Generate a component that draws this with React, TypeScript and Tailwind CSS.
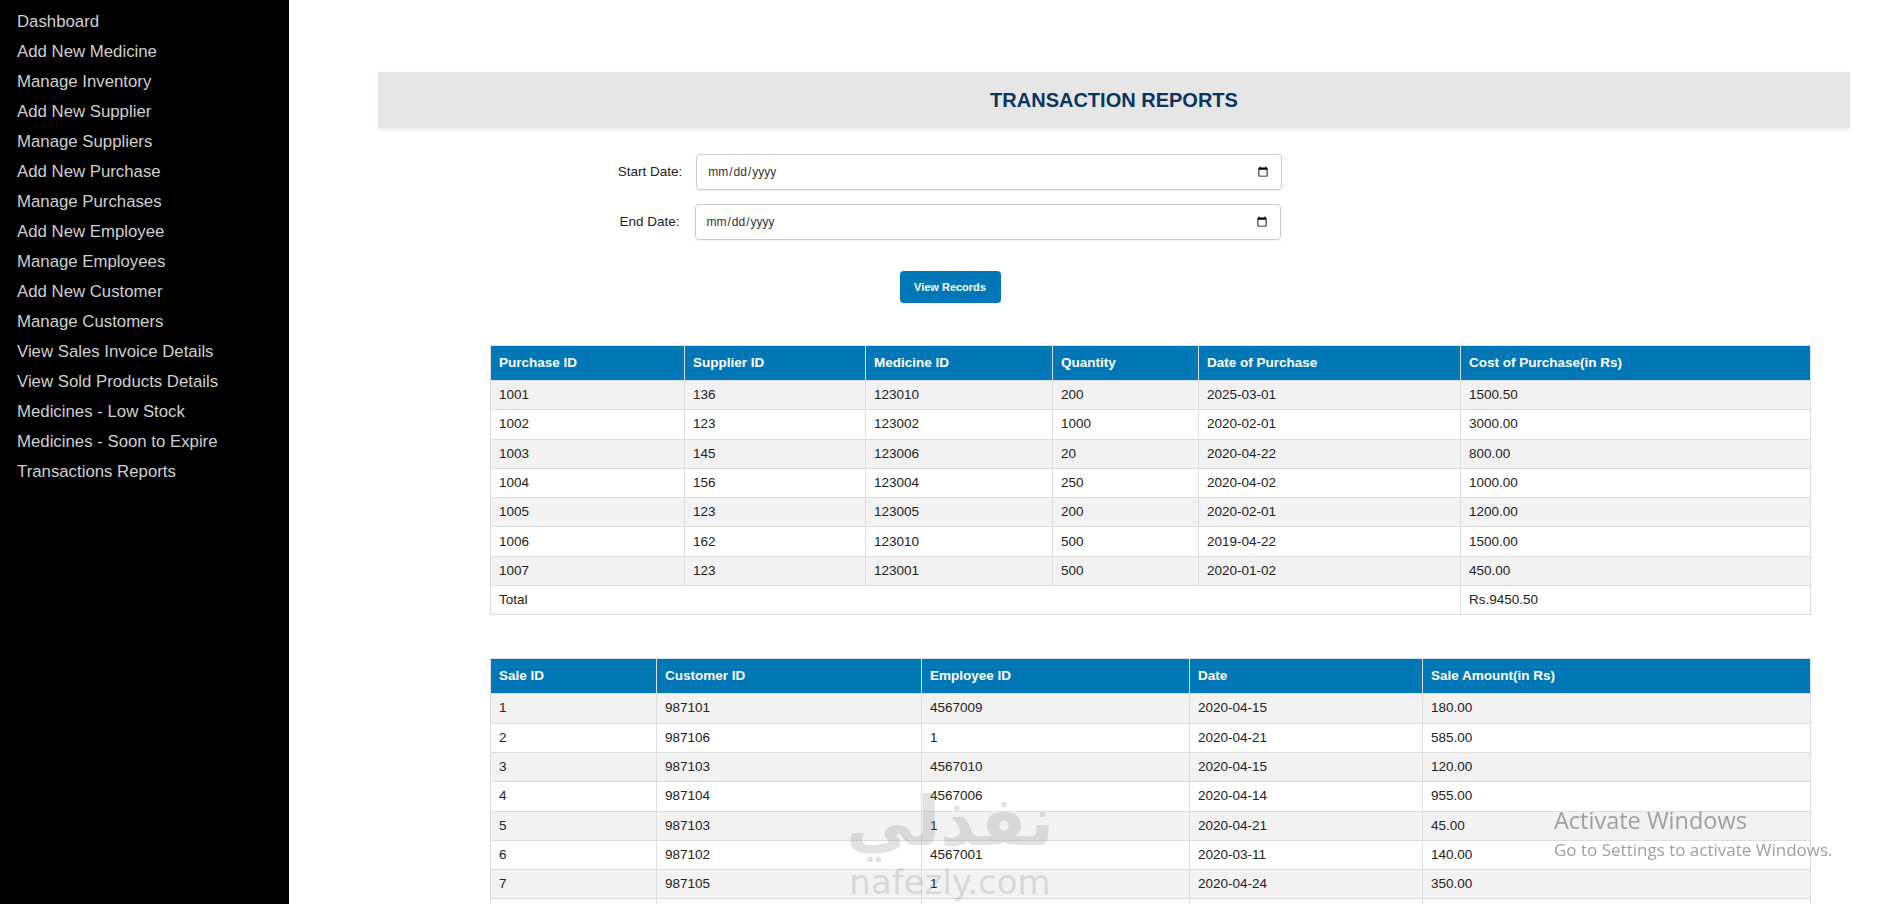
import React from 'react';

const menuItems = [
  'Dashboard',
  'Add New Medicine',
  'Manage Inventory',
  'Add New Supplier',
  'Manage Suppliers',
  'Add New Purchase',
  'Manage Purchases',
  'Add New Employee',
  'Manage Employees',
  'Add New Customer',
  'Manage Customers',
  'View Sales Invoice Details',
  'View Sold Products Details',
  'Medicines - Low Stock',
  'Medicines - Soon to Expire',
  'Transactions Reports',
];

const purchases = [
  ['1001', '136', '123010', '200', '2025-03-01', '1500.50'],
  ['1002', '123', '123002', '1000', '2020-02-01', '3000.00'],
  ['1003', '145', '123006', '20', '2020-04-22', '800.00'],
  ['1004', '156', '123004', '250', '2020-04-02', '1000.00'],
  ['1005', '123', '123005', '200', '2020-02-01', '1200.00'],
  ['1006', '162', '123010', '500', '2019-04-22', '1500.00'],
  ['1007', '123', '123001', '500', '2020-01-02', '450.00'],
];

const sales = [
  ['1', '987101', '4567009', '2020-04-15', '180.00'],
  ['2', '987106', '1', '2020-04-21', '585.00'],
  ['3', '987103', '4567010', '2020-04-15', '120.00'],
  ['4', '987104', '4567006', '2020-04-14', '955.00'],
  ['5', '987103', '1', '2020-04-21', '45.00'],
  ['6', '987102', '4567001', '2020-03-11', '140.00'],
  ['7', '987105', '1', '2020-04-24', '350.00'],
  ['8', '987101', '4567009', '2020-04-25', '220.00'],
];

const th = 'h-[35px] px-[8px] text-left font-bold text-white border border-[#dddddd]';
const td = 'h-[29.3px] px-[8px] py-0 border border-[#dddddd] align-middle';

export default function App() {
  return (
    <div className="flex min-h-screen bg-white font-['Liberation_Sans',Arial,sans-serif]">
      {/* Sidebar */}
      <aside className="w-[289px] shrink-0 bg-black pt-[7px]">
        <ul>
          {menuItems.map((item) => (
            <li key={item} className="h-[30px] flex items-center pl-[17px] text-[16.8px] text-[#cfcfcf]">
              {item}
            </li>
          ))}
        </ul>
      </aside>

      {/* Main content */}
      <main className="flex-1 min-w-0 pb-10">
        <div className="ml-[89px] mt-[72px] w-[1472px] h-[56px] bg-[#e6e6e6] shadow-[0_2px_3px_rgba(0,0,0,0.08)] flex items-center justify-center">
          <h1 className="text-[20px] font-bold text-[#0a3560]">TRANSACTION REPORTS</h1>
        </div>

        {/* Date filter */}
        <form className="w-[1322px] mt-[26px] flex flex-col items-center">
          <div className="flex items-center gap-[14px]">
            <label className="text-[13.5px] text-[#222]">Start Date:</label>
            <input
              type="date"
              className="w-[586px] h-[36px] px-[10px] text-[12px] text-[#333] border border-[#cccccc] rounded-[4px] shadow-[0_1px_2px_rgba(0,0,0,0.06)]"
            />
          </div>
          <div className="flex items-center gap-[15px] mt-[14px]">
            <label className="text-[13.5px] text-[#222]">End Date:</label>
            <input
              type="date"
              className="w-[586px] h-[36px] px-[10px] text-[12px] text-[#333] border border-[#cccccc] rounded-[4px] shadow-[0_1px_2px_rgba(0,0,0,0.06)]"
            />
          </div>
          <button
            type="button"
            className="mt-[31px] w-[101px] h-[32px] rounded-[4px] bg-[#0077b6] text-white text-[11px] font-bold"
          >
            View Records
          </button>
        </form>

        {/* Purchases table */}
        <table className="ml-[201px] mt-[42px] w-[1320px] table-fixed border-collapse text-[13.5px] text-[#222]">
          <colgroup>
            <col className="w-[194px]" />
            <col className="w-[181px]" />
            <col className="w-[187px]" />
            <col className="w-[146px]" />
            <col className="w-[262px]" />
            <col className="w-[350px]" />
          </colgroup>
          <thead>
            <tr className="bg-[#0077b6]">
              <th className={th}>Purchase ID</th>
              <th className={th}>Supplier ID</th>
              <th className={th}>Medicine ID</th>
              <th className={th}>Quantity</th>
              <th className={th}>Date of Purchase</th>
              <th className={th}>Cost of Purchase(in Rs)</th>
            </tr>
          </thead>
          <tbody>
            {purchases.map((row, i) => (
              <tr key={row[0]} className={i % 2 === 0 ? 'bg-[#f2f2f2]' : 'bg-white'}>
                {row.map((cell, j) => (
                  <td key={j} className={td}>{cell}</td>
                ))}
              </tr>
            ))}
            <tr className="bg-white">
              <td colSpan={5} className={td}>Total</td>
              <td className={td}>Rs.9450.50</td>
            </tr>
          </tbody>
        </table>

        {/* Sales table */}
        <table className="ml-[201px] mt-[43px] w-[1320px] table-fixed border-collapse text-[13.5px] text-[#222]">
          <colgroup>
            <col className="w-[166px]" />
            <col className="w-[265px]" />
            <col className="w-[268px]" />
            <col className="w-[233px]" />
            <col className="w-[388px]" />
          </colgroup>
          <thead>
            <tr className="bg-[#0077b6]">
              <th className={th}>Sale ID</th>
              <th className={th}>Customer ID</th>
              <th className={th}>Employee ID</th>
              <th className={th}>Date</th>
              <th className={th}>Sale Amount(in Rs)</th>
            </tr>
          </thead>
          <tbody>
            {sales.map((row, i) => (
              <tr key={row[0]} className={i % 2 === 0 ? 'bg-[#f2f2f2]' : 'bg-white'}>
                {row.map((cell, j) => (
                  <td key={j} className={td}>{cell}</td>
                ))}
              </tr>
            ))}
            <tr className="bg-white">
              <td colSpan={4} className={td}>Total</td>
              <td className={td}>Rs.2595.00</td>
            </tr>
          </tbody>
        </table>
      </main>

      {/* Screenshot overlays: site watermark and Windows activation notice */}
      <div className="fixed left-[842px] top-[786px] w-[216px] pointer-events-none flex flex-col items-center text-[#8a8a8a] opacity-25">
        <span className="text-[68px] leading-[72px] font-bold font-['DejaVu_Sans',sans-serif]">نفذلي</span>
        <span className="text-[34px] leading-[36px] mt-[6px] font-['DejaVu_Sans',sans-serif]">nafezly.com</span>
      </div>
      <div className="fixed left-[1554px] top-[804px] pointer-events-none text-[#a0a0a0] font-['Open_Sans',sans-serif]">
        <div className="text-[23.5px] leading-[32px]">Activate Windows</div>
        <div className="text-[17px] leading-[22px] mt-[3px]">Go to Settings to activate Windows.</div>
      </div>
    </div>
  );
}
